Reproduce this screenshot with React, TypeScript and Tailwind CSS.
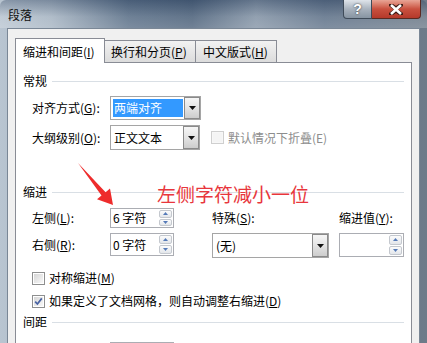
import React from "react";

function Tri() {
  return (
    <svg width="7" height="4" viewBox="0 0 7 4">
      <path d="M0 0H7L3.5 4Z" fill="#111" />
    </svg>
  );
}

function DropBtn() {
  return (
    <div className="w-[16px] self-stretch border border-[#8a8a8a] bg-linear-to-b from-[#f6f6f6] via-[#e4e4e4] to-[#cdcdcd] flex items-center justify-center">
      <Tri />
    </div>
  );
}

function SpinBtns() {
  return (
    <div className="flex flex-col w-[14px] self-stretch py-px pr-px gap-px">
      <div className="flex-1 border border-[#c4c8ce] rounded-[2px] bg-linear-to-b from-[#fcfcfc] to-[#e3e6ea] flex items-center justify-center">
        <svg width="5" height="3" viewBox="0 0 5 3">
          <path d="M0 3L2.5 0L5 3Z" fill="#557ab8" />
        </svg>
      </div>
      <div className="flex-1 border border-[#c4c8ce] rounded-[2px] bg-linear-to-b from-[#fcfcfc] to-[#e3e6ea] flex items-center justify-center">
        <svg width="5" height="3" viewBox="0 0 5 3">
          <path d="M0 0L2.5 3L5 0Z" fill="#557ab8" />
        </svg>
      </div>
    </div>
  );
}

function Spin({ value, className }: { value: string; className: string }) {
  return (
    <div className={"flex items-center border border-[#abadb3] bg-white " + className}>
      <div className="flex-1 pl-[2px] leading-[14px] whitespace-pre">{value}</div>
      <SpinBtns />
    </div>
  );
}

function Check({ checked, disabled }: { checked?: boolean; disabled?: boolean }) {
  return (
    <div
      className={
        "w-[13px] h-[13px] border p-px shrink-0 " +
        (disabled ? "border-[#cfcfcf] bg-[#f7f7f7]" : "border-[#8e8f8f] bg-white")
      }
    >
      <div
        className={
          "w-full h-full flex items-center justify-center " +
          (disabled ? "bg-[#f4f4f4]" : "bg-linear-to-br from-[#d6d6d6] to-[#f8f8f8]")
        }
      >
        {checked && (
          <svg width="9" height="9" viewBox="0 0 9 9">
            <path d="M1.2 4.6L3.4 7L7.8 1.4" stroke="#4862a3" strokeWidth="1.7" fill="none" />
          </svg>
        )}
      </div>
    </div>
  );
}

function Section({ title, className }: { title: string; className: string }) {
  return (
    <div className={"flex items-center h-[14px] " + className}>
      <span className="leading-[14px]">{title}</span>
      <div className="flex-1 h-px bg-[#d9dfe5] ml-[5px]" />
    </div>
  );
}

export default function App() {
  return (
    <div className="w-[427px] h-[343px] overflow-hidden relative bg-[linear-gradient(90deg,#b9c5d1_0%,#a6b4c2_12%,#5b7088_30%,#4d627b_45%,#8494a6_60%,#5f7289_76%,#6e7b89_100%)] font-['Noto_Sans_CJK_SC',sans-serif] text-[12px] text-[#000]">
      {/* title bar */}
      <div className="h-[28px] flex items-start justify-between rounded-t-[6px] bg-[linear-gradient(180deg,rgba(40,60,90,0.35)_0%,rgba(255,255,255,0.12)_60%,rgba(255,255,255,0.2)_100%)]">
        <div className="pl-[8px] pt-[7px] leading-[16px] text-[12px] text-[#111]">段落</div>
        <div className="flex mr-[6px]">
          <div className="w-[29px] h-[19px] border border-[#3f4b59] border-t-0 rounded-bl-[4px] bg-linear-to-b from-[#dfe4ea] via-[#a9b3be] to-[#8794a2] flex items-center justify-center">
            <span className="font-['Liberation_Sans',sans-serif] font-bold text-[14px] leading-[14px] text-white [text-shadow:0_0_2px_#222]">?</span>
          </div>
          <div className="w-[49px] h-[19px] border border-[#5a2a22] border-t-0 border-l-0 rounded-br-[4px] bg-linear-to-b from-[#e8a596] via-[#c9503f] to-[#b5392a] flex items-center justify-center">
            <svg width="14" height="11" viewBox="0 0 14 11">
              <path d="M2 1L7 4.5L12 1M2 10L7 6.5L12 10" stroke="#3a1a14" strokeWidth="4" fill="none" strokeLinecap="round" />
              <path d="M2 1L12 10M12 1L2 10" stroke="#fff" strokeWidth="2.6" fill="none" />
            </svg>
          </div>
        </div>
      </div>

      {/* client area */}
      <div className="ml-[7px] w-[413px] h-[330px] border border-[#7a8796] bg-[#f0f0f0] pt-[9px] pl-[7px]">
        {/* tabs */}
        <div className="flex items-end">
          <div className="w-[90px] h-[25px] -mb-px relative z-10 border border-b-0 border-[#898c95] bg-white pl-[7px] pt-[6px] leading-[14px]">
            缩进和间距(<u>I</u>)
          </div>
          <div className="w-[91px] h-[22px] border border-l-0 border-b-0 border-[#898c95] bg-linear-to-b from-[#f2f2f2] to-[#dcdcdc] pl-[6px] pt-[4px] leading-[14px]">
            换行和分页(<u>P</u>)
          </div>
          <div className="w-[81px] h-[22px] border border-l-0 border-b-0 border-[#898c95] bg-linear-to-b from-[#f2f2f2] to-[#dcdcdc] pl-[7px] pt-[4px] leading-[14px]">
            中文版式(<u>H</u>)
          </div>
        </div>

        {/* panel */}
        <div className="w-[397px] h-[320px] border border-[#898c95] bg-white px-[7px] leading-[14px]">
          <Section title="常规" className="mt-[11px]" />

          <div className="mt-[8px] h-[24px] flex items-center pl-[9px]">
            <div className="w-[78px]">对齐方式(<u>G</u>):</div>
            <div className="w-[91px] h-[24px] flex border border-[#a5a5a5] bg-white">
              <div className="flex-1 flex items-center p-[2px] pr-[1px]">
                <div className="w-full h-full bg-[#3399ff] text-white flex items-center pl-[1px]">两端对齐</div>
              </div>
              <DropBtn />
            </div>
          </div>

          <div className="mt-[5px] h-[25px] flex items-center pl-[9px]">
            <div className="w-[78px]">大纲级别(<u>O</u>):</div>
            <div className="w-[90px] h-[25px] flex border border-[#a5a5a5] bg-white">
              <div className="flex-1 flex items-center pl-[3px]">正文文本</div>
              <DropBtn />
            </div>
            <div className="ml-[11px] flex items-center">
              <Check disabled />
              <span className="ml-[4px] text-[#8d8d8d]">默认情况下折叠(E)</span>
            </div>
          </div>

          <Section title="缩进" className="mt-[35px]" />

          <div className="mt-[9px] h-[20px] flex items-center pl-[9px]">
            <div className="w-[78px]">左侧(<u>L</u>):</div>
            <Spin value="6 字符" className="w-[64px] h-[20px]" />
            <div className="ml-[38px] w-[127px]">特殊(<u>S</u>):</div>
            <div>缩进值(<u>Y</u>):</div>
          </div>

          <div className="mt-[5px] h-[24px] flex items-start pl-[9px]">
            <div className="w-[78px] h-[24px] flex items-center">右侧(<u>R</u>):</div>
            <Spin value="0 字符" className="w-[64px] h-[23px]" />
            <div className="ml-[38px] w-[117px] h-[25px] flex border border-[#a5a5a5] bg-white">
              <div className="flex-1 flex items-center pl-[3px]">(无)</div>
              <DropBtn />
            </div>
            <Spin value="" className="ml-[10px] w-[65px] h-[24px]" />
          </div>

          <div className="mt-[14px] h-[14px] flex items-center pl-[9px]">
            <Check />
            <span className="ml-[4px]">对称缩进(<u>M</u>)</span>
          </div>

          <div className="mt-[9px] h-[14px] flex items-center pl-[9px]">
            <Check checked />
            <span className="ml-[4px]">如果定义了文档网格，则自动调整右缩进(<u>D</u>)</span>
          </div>

          <Section title="间距" className="mt-[7px]" />

          <div className="mt-[13px] h-[20px] flex items-center pl-[9px]">
            <div className="w-[78px]">段前(<u>B</u>):</div>
            <Spin value="0 行" className="w-[64px] h-[20px]" />
            <div className="ml-[38px] w-[127px]">行距(<u>N</u>):</div>
            <div>设置值(<u>A</u>):</div>
          </div>
        </div>
      </div>

      {/* annotation */}
      <div className="absolute left-[157px] top-[184px] text-[19px] leading-[20px] text-[#e8363c] whitespace-nowrap">
        左侧字符减小一位
      </div>
      <svg className="absolute left-0 top-0 pointer-events-none" width="427" height="343" viewBox="0 0 427 343">
        <path d="M78 163L105.6 192.3L110 188.6L113 205L97 199.2L101.5 195.6Z" fill="#ee2c2c" />
      </svg>
    </div>
  );
}
